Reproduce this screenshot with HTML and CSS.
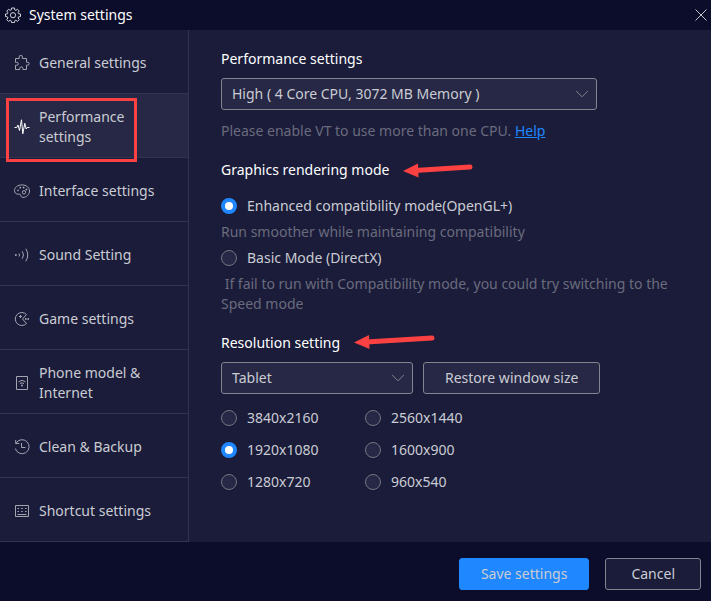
FILE: index.html
```html
<!DOCTYPE html>
<html lang="en">
<head>
    <meta charset="UTF-8">
    <title>System settings</title>
    <link rel="stylesheet" href="styles.css">
</head>
<body>
<form class="window">
    <header class="titlebar">
        <svg class="gear" viewBox="0 0 16 16">
            <path d="M6.500 1h3l.3 2 1 .4 1.700-1.100 1.700 1.700-1.100 1.700.4 1 2 .3v2.500l-2 .4-.4 1 1.100 1.700-1.700 1.800-1.700-1.200-1 .5-.3 1.900h-3l-.3-1.900-1-.5-1.700 1.200-1.700-1.800 1.100-1.700-.4-1-2-.4V7l2-.3.4-1L1.800 4l1.700-1.700 1.700 1.100 1-.4z"/>
            <circle cx="8" cy="8.200" r="2.600"/>
        </svg>
        <h1 class="title">System settings</h1>
        <button class="close" type="button" aria-label="Close">
            <svg viewBox="0 0 12 12"><path d="M.5.5l11 11M11.5.5l-11 11"/></svg>
        </button>
    </header>

    <div class="body">
        <nav class="sidebar">
            <a class="item" href="#general">
                <svg class="icon" viewBox="0 0 16 16"><path d="M1.500 3.500h3.800c.4-.4-.2-.8-.2-1.400a1.700 1.700 0 0 1 3.400 0c0 .6-.5 1-.2 1.400h4.200v3.800c.3.3.7-.1 1.200-.1a1.500 1.500 0 0 1 0 3c-.5 0-.9-.4-1.200-.1v4.400H8.900c-.3-.4.2-.8.1-1.400a1.700 1.700 0 0 0-3.300 0c0 .6.4 1 .1 1.400H1.500v-4.300c.3-.3.8.1 1.300.1a1.500 1.500 0 0 0 0-3c-.5 0-1 .4-1.300.1z"/></svg>
                <span>General settings</span>
            </a>
            <a class="item active" href="#performance">
                <svg class="icon" viewBox="0 0 16 16"><path d="M.5 8.500h2.200l1.300-2.500 1.500 5.500L7.500.8l1.300 14 2-10.500 1.400 5.700 1-1.500h2.300"/></svg>
                <span>Performance settings</span>
                <i class="mark"></i>
            </a>
            <a class="item" href="#interface">
                <svg class="icon" viewBox="0 0 16 16">
                    <path d="M8 1.900c-4.300 0-7.500 2.500-7.500 5.600 0 2.300 1.500 3.700 3.700 3.700 1.200 0 2.200-.2 2.500.8.300 1.200.4 2.400 2.200 2.400 3.700 0 6.600-2.900 6.600-6.400 0-3.500-3.200-6.100-7.500-6.100z"/>
                    <circle cx="10" cy="9.300" r="1.700"/>
                    <circle class="dot" cx="4" cy="7.300" r=".9"/>
                    <circle class="dot" cx="6.300" cy="4.700" r=".9"/>
                    <circle class="dot" cx="9.600" cy="4.500" r=".9"/>
                    <circle class="dot" cx="12.400" cy="6.500" r=".9"/>
                </svg>
                <span>Interface settings</span>
            </a>
            <a class="item" href="#sound">
                <svg class="icon" viewBox="0 0 16 16">
                    <path d="M5 6.500q1 1.500 0 3M8.300 4.300q2.400 3.700 0 7.400M11.800 1.700q3.900 6.300 0 12.600"/>
                    <circle class="dot" cx="1.900" cy="8" r="1"/>
                </svg>
                <span>Sound Setting</span>
            </a>
            <a class="item" href="#game">
                <svg class="icon" viewBox="0 0 16 16">
                    <path d="M12.500 3.500a6.500 6.500 0 1 0 0 9L8.500 8zM6.500 4v3M5 5.500h3"/>
                    <circle class="dot" cx="11.800" cy="8" r=".9"/>
                    <circle class="dot" cx="14.200" cy="8" r=".9"/>
                </svg>
                <span>Game settings</span>
            </a>
            <a class="item" href="#phone">
                <svg class="icon" viewBox="0 0 16 16">
                    <path d="M2.500 1.500h11v13h-11zM4.500 6.800q3.500-3 7 0M6 8.600q2-1.700 4 0"/>
                    <circle class="dot" cx="8" cy="10.400" r="1"/>
                </svg>
                <span>Phone model &amp; Internet</span>
            </a>
            <a class="item" href="#backup">
                <svg class="icon" viewBox="0 0 16 16"><path d="M1.700 1v3.500h3.600M1.900 4.400A7 7 0 1 1 1.300 9.500M7.500 4v4.500h4"/></svg>
                <span>Clean &amp; Backup</span>
            </a>
            <a class="item" href="#shortcut">
                <svg class="icon" viewBox="0 0 16 16"><path d="M1.500 2.500h13v11h-13zM3.500 5.500H5M7.200 5.500h1.600M11 5.500h1.500M3.500 8.500H5M7.200 8.500h1.600M11 8.500h1.500M3.500 11.500h9"/></svg>
                <span>Shortcut settings</span>
            </a>
        </nav>

        <main class="content">
            <section class="section">
                <h2 class="heading"><label for="performance">Performance settings</label></h2>
                <div class="select wide">
                    <select id="performance">
                        <option>High ( 4 Core CPU, 3072 MB Memory )</option>
                    </select>
                    <svg class="chevron" viewBox="0 0 12 8"><path d="M0 .8l6 6 6-6"/></svg>
                </div>
                <p class="hint below">Please enable VT to use more than one CPU. <a href="#help">Help</a></p>
            </section>

            <section class="section">
                <h2 class="heading">
                    Graphics rendering mode
                    <svg class="arrow" viewBox="0 0 70 16"><path class="shaft" d="M12 8.500L67 5"/><path class="head" d="M0 9l15-7.500.5 14z"/></svg>
                </h2>
                <div class="modes">
                    <label class="radio"><input type="radio" name="mode" checked> Enhanced compatibility mode(OpenGL+)</label>
                    <p class="hint">Run smoother while maintaining compatibility</p>
                    <label class="radio"><input type="radio" name="mode"> Basic Mode (DirectX)</label>
                    <p class="hint">&nbsp;If fail to run with Compatibility mode, you could try switching to the Speed mode</p>
                </div>
            </section>

            <section class="section">
                <h2 class="heading">
                    <label for="device">Resolution setting</label>
                    <svg class="arrow long" viewBox="0 0 81 16"><path class="shaft" d="M12 7L78 3"/><path class="head" d="M0 7.500L15 0l.5 14z"/></svg>
                </h2>
                <div class="row">
                    <div class="select">
                        <select id="device">
                            <option>Tablet</option>
                        </select>
                        <svg class="chevron" viewBox="0 0 12 8"><path d="M0 .8l6 6 6-6"/></svg>
                    </div>
                    <button class="btn restore" type="button">Restore window size</button>
                </div>
                <div class="sizes">
                    <label class="radio"><input type="radio" name="size"> 3840x2160</label>
                    <label class="radio"><input type="radio" name="size"> 2560x1440</label>
                    <label class="radio"><input type="radio" name="size" checked> 1920x1080</label>
                    <label class="radio"><input type="radio" name="size"> 1600x900</label>
                    <label class="radio"><input type="radio" name="size"> 1280x720</label>
                    <label class="radio"><input type="radio" name="size"> 960x540</label>
                </div>
            </section>
        </main>
    </div>

    <footer class="footer">
        <button class="btn primary" type="button">Save settings</button>
        <button class="btn" type="button">Cancel</button>
    </footer>
</form>
</body>
</html>
```
FILE: styles.css
```css
* {
    margin: 0;
    padding: 0;
    box-sizing: border-box;
}

body {
    background-color: #0b0d2b;
    color: #cbccd3;
    font: 14px/20px "Noto Sans", "Open Sans", sans-serif;
}

button, select, input {
    font: inherit;
    color: inherit;
}

svg {
    display: block;
    flex: none;
    fill: none;
    stroke: currentColor;
}

.window {
    display: flex;
    flex-direction: column;
    min-height: 100vh;
}

/* title bar */
.titlebar {
    display: flex;
    align-items: center;
    gap: 8px;
    height: 30px;
    padding: 0 4px 0 5px;
    color: #fff;
}

.gear {
    width: 16px;
    height: 16px;
    color: #d4d5dc;
}

.title {
    flex: 1;
    font-size: 14px;
    font-weight: 400;
}

.close {
    border: 0;
    background: none;
    color: #c4c5cf;
}

.close svg {
    width: 12px;
    height: 12px;
}

.body {
    display: flex;
    flex: 1;
    background-color: #1a1c3a;
}

/* sidebar */
.sidebar {
    flex: none;
    width: 189px;
    border-right: 1px solid #313350;
}

.item {
    position: relative;
    display: flex;
    align-items: center;
    gap: 9px;
    height: 64px;
    padding: 2px 32px 0 14px;
    border-bottom: 1px solid #313350;
    color: #cbccd3;
    text-decoration: none;
}

.icon {
    width: 16px;
    height: 16px;
    color: #a3a4b0;
}

.dot {
    fill: currentColor;
    stroke: none;
}

.active {
    background-color: #262845;
}

.active .icon {
    color: #fff;
}

.mark {
    position: absolute;
    top: 4px;
    left: 6px;
    width: 131px;
    height: 64px;
    border: 3px solid #fb4141;
    z-index: 1;
}

/* content */
.content {
    flex: 1;
    display: flex;
    flex-direction: column;
    gap: 19px;
    padding: 19px 24px 19px 32px;
}

.heading {
    display: flex;
    align-items: center;
    gap: 14px;
    margin-bottom: 9px;
    font-size: 14px;
    font-weight: 400;
    color: #fff;
}

.arrow {
    width: 70px;
    height: 16px;
}

.arrow.long {
    width: 81px;
}

.shaft {
    stroke: #fb4141;
    stroke-width: 5;
    stroke-linecap: round;
}

.head {
    fill: #fb4141;
    stroke: none;
}

.select {
    display: grid;
    align-items: center;
    width: 192px;
    max-width: 100%;
}

.select.wide {
    width: 376px;
}

.select select {
    grid-area: 1 / 1;
    width: 100%;
    height: 32px;
    padding: 0 32px 0 10px;
    border: 1px solid #83848f;
    border-radius: 3px;
    background-color: #262845;
    appearance: none;
}

.chevron {
    grid-area: 1 / 1;
    justify-self: end;
    width: 12px;
    height: 8px;
    margin-right: 9px;
    color: #83848f;
    pointer-events: none;
}

.hint {
    color: #6a6b7d;
}

.hint.below {
    margin-top: 11px;
}

.hint a {
    color: #1f87ff;
}

.modes {
    display: flex;
    flex-direction: column;
    gap: 6px;
    margin-top: 16px;
}

.radio {
    display: flex;
    align-items: center;
    gap: 10px;
}

.radio input {
    flex: none;
    width: 16px;
    height: 16px;
    border: 1px solid #74757f;
    border-radius: 50%;
    background-color: #262845;
    appearance: none;
}

.radio input:checked {
    border: 4px solid #1f87ff;
    background-color: #fff;
}

.row {
    display: flex;
    gap: 10px;
}

.sizes {
    display: grid;
    grid-template-columns: 144px 144px;
    row-gap: 12px;
    margin-top: 14px;
}

.btn {
    height: 32px;
    padding: 0 25px;
    border: 1px solid #83848f;
    border-radius: 3px;
    background-color: #1a1c3a;
}

.restore {
    padding: 0 21px;
    background-color: #262845;
}

.primary {
    padding: 0 21px;
    border-color: #1f87ff;
    background-color: #1f87ff;
}

/* footer */
.footer {
    display: flex;
    align-items: center;
    justify-content: flex-end;
    gap: 16px;
    height: 59px;
    padding: 4px 10px 0;
}
```
